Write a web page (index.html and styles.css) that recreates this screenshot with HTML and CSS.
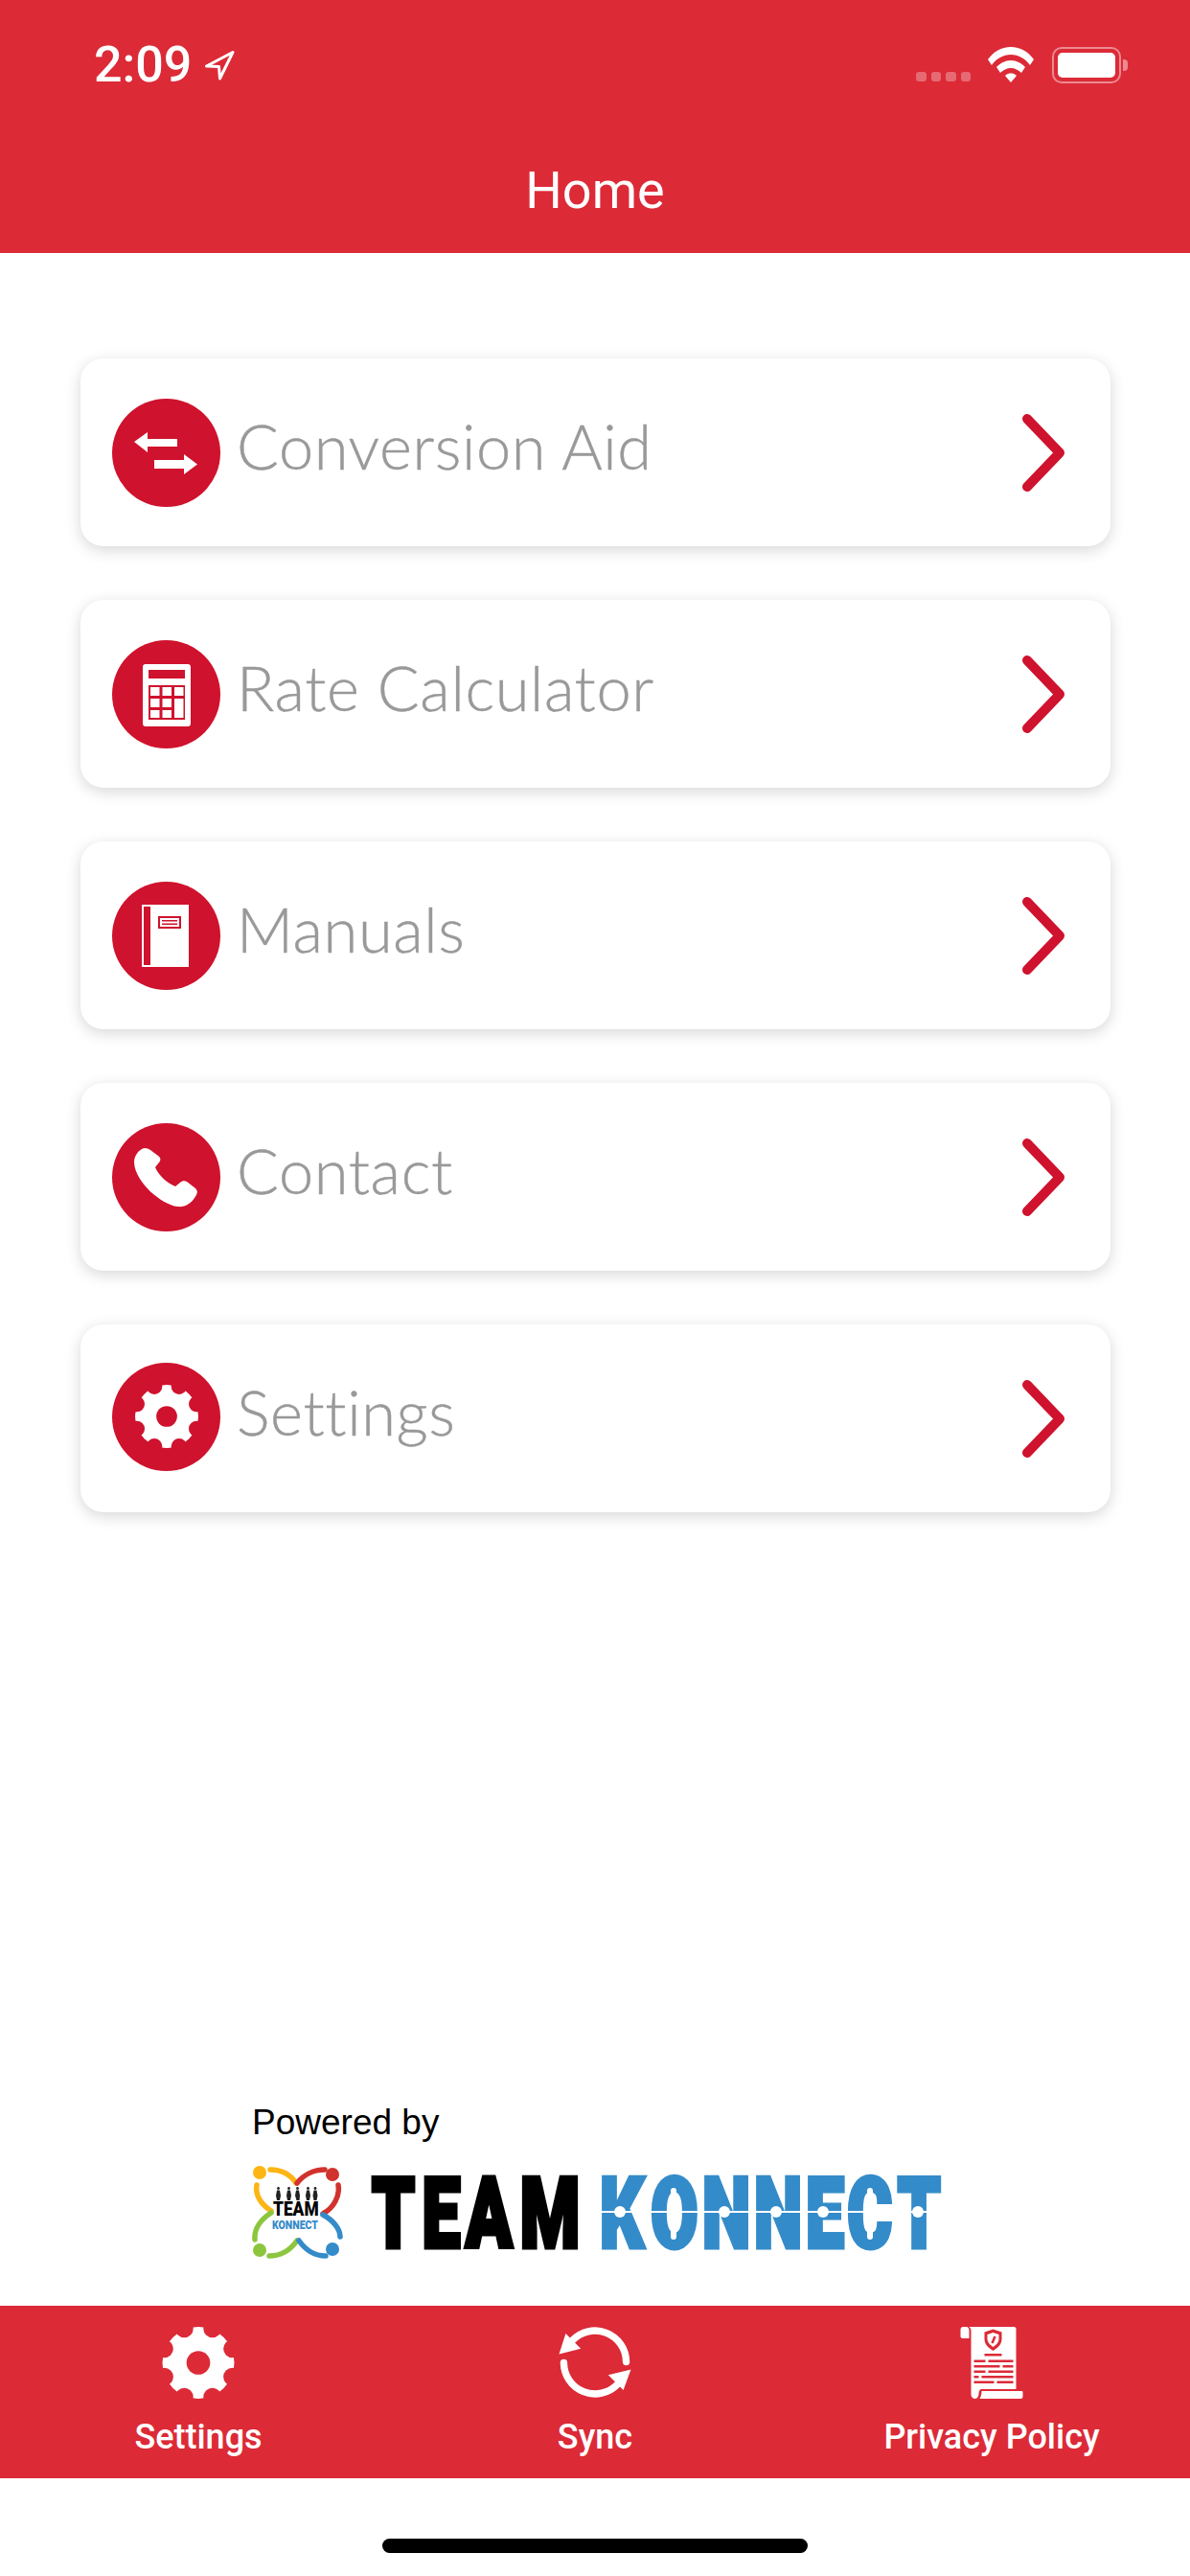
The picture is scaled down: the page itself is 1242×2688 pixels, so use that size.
FILE: index.html
```html
<!DOCTYPE html>
<html lang="en">
<head>
<meta charset="utf-8">
<title>Home</title>
<link rel="stylesheet" href="styles.css">
</head>
<body>
<svg class="defs" width="0" height="0" aria-hidden="true">
  <symbol id="gear" viewBox="0 0 76 76">
    <circle class="gear-body" cx="38" cy="38" r="38"/>
    <g class="gear-cut">
      <circle cx="38" cy="38" r="12.5"/>
      <circle cx="52.9" cy="2" r="9.5"/>
      <circle cx="74" cy="23.1" r="9.5"/>
      <circle cx="74" cy="52.9" r="9.5"/>
      <circle cx="52.9" cy="74" r="9.5"/>
      <circle cx="23.1" cy="74" r="9.5"/>
      <circle cx="2" cy="52.9" r="9.5"/>
      <circle cx="2" cy="23.1" r="9.5"/>
      <circle cx="23.1" cy="2" r="9.5"/>
    </g>
  </symbol>
</svg>

<div class="page">
  <header class="topbar">
    <div class="status">
      <div class="status-left">
        <span class="time">2:09</span>
        <svg class="loc" viewBox="0 0 32 32"><path d="M30 2.500 L2.500 17 L15.500 17.500 L16.500 30 Z" fill="none" stroke="#fff" stroke-width="3" stroke-linejoin="round"/></svg>
      </div>
      <div class="status-right">
        <div class="signal"><i></i><i></i><i></i><i></i></div>
        <svg class="wifi" viewBox="0 0 48 37">
          <path d="M0 13 C6 5 14 0 24 0 C34 0 42 5 48 13 L44 19 C39 12 32 8 24 8 C16 8 9 12 4 19 Z" fill="#fff"/>
          <path d="M9 21 C13 17 18 14 24 14 C30 14 35 17 39 21 L35 27 C32 24 28 22 24 22 C20 22 16 24 13 27 Z" fill="#fff"/>
          <path d="M18 30 C20 28 22 27.500 24 27.500 C26 27.500 28 28 30 30 L24 37 Z" fill="#fff"/>
        </svg>
        <div class="battery"><div class="battery-fill"></div></div>
        <div class="battery-nub"></div>
      </div>
    </div>
    <h1 class="title">Home</h1>
  </header>

  <main class="menu">
    <a class="card">
      <svg class="badge" viewBox="0 0 113 113">
        <circle cx="56.500" cy="56.500" r="56.500" fill="#cf122d"/>
        <path d="M23 45 L37 35 V42 H68 V50 H37 V56 Z M44 64 H75 V58 L89 68.500 L75 79 V73 H44 Z" fill="#fff"/>
      </svg>
      <span class="label">Conversion Aid</span>
      <svg class="chev" viewBox="0 0 44 81"><path d="M5 5 L39 40.500 L5 76" fill="none" stroke="#cf122d" stroke-width="10" stroke-linecap="round" stroke-linejoin="round"/></svg>
    </a>
    <a class="card">
      <svg class="badge" viewBox="0 0 113 113">
        <circle cx="56.500" cy="56.500" r="56.500" fill="#cf122d"/>
        <rect x="32" y="25" width="50" height="65" rx="3" fill="#fff"/>
        <g fill="#cf122d">
          <rect x="38" y="31" width="38" height="9"/>
          <rect x="38" y="47" width="38" height="36"/>
        </g>
        <g fill="#fff">
          <rect x="40" y="49" width="9.500" height="9"/><rect x="52.500" y="49" width="9.500" height="9"/><rect x="65" y="49" width="9.500" height="9"/>
          <rect x="40" y="61" width="9.500" height="9"/><rect x="52.500" y="61" width="9.500" height="9"/><rect x="65" y="61" width="9.500" height="20"/>
          <rect x="40" y="73" width="9.500" height="8"/><rect x="52.500" y="73" width="9.500" height="8"/>
        </g>
      </svg>
      <span class="label">Rate Calculator</span>
      <svg class="chev" viewBox="0 0 44 81"><path d="M5 5 L39 40.500 L5 76" fill="none" stroke="#cf122d" stroke-width="10" stroke-linecap="round" stroke-linejoin="round"/></svg>
    </a>
    <a class="card">
      <svg class="badge" viewBox="0 0 113 113">
        <circle cx="56.500" cy="56.500" r="56.500" fill="#cf122d"/>
        <rect x="31" y="24" width="49" height="65" fill="#fff"/>
        <rect x="33" y="26" width="7" height="61" fill="#cf122d"/>
        <rect x="48" y="36" width="24" height="13" fill="#cf122d"/>
        <rect x="50" y="38" width="20" height="9" fill="#fff"/>
        <rect x="52" y="40" width="16" height="1.500" fill="#cf122d"/>
        <rect x="52" y="43.500" width="16" height="1.500" fill="#cf122d"/>
      </svg>
      <span class="label">Manuals</span>
      <svg class="chev" viewBox="0 0 44 81"><path d="M5 5 L39 40.500 L5 76" fill="none" stroke="#cf122d" stroke-width="10" stroke-linecap="round" stroke-linejoin="round"/></svg>
    </a>
    <a class="card">
      <svg class="badge" viewBox="0 0 113 113">
        <circle cx="56.500" cy="56.500" r="56.500" fill="#cf122d"/>
        <path d="M31 27 C34 25 37 26 40 28 L48 34 C51 36 51 39 49 41 L45 46 C48 54 58 63 66 66 L71 62 C73 60 76 60 78 61 L87 68 C90 71 89 74 86 78 C82 84 76 88 68 87 C52 85 24 62 23 41 C23 35 26 30 31 27 Z" fill="#fff"/>
      </svg>
      <span class="label">Contact</span>
      <svg class="chev" viewBox="0 0 44 81"><path d="M5 5 L39 40.500 L5 76" fill="none" stroke="#cf122d" stroke-width="10" stroke-linecap="round" stroke-linejoin="round"/></svg>
    </a>
    <a class="card">
      <span class="badge badge-gear"><svg class="gear-main"><use href="#gear"/></svg></span>
      <span class="label">Settings</span>
      <svg class="chev" viewBox="0 0 44 81"><path d="M5 5 L39 40.500 L5 76" fill="none" stroke="#cf122d" stroke-width="10" stroke-linecap="round" stroke-linejoin="round"/></svg>
    </a>
  </main>

  <section class="powered">
    <p class="powered-text">Powered by</p>
    <svg class="logo" viewBox="0 -14 760 130">
      <g fill="none" stroke-width="5.500" stroke-linecap="round">
        <path d="M19 4 C30 4 40 9 46 18 M5 20 C3 30 9 40 20 47" stroke="#fdb515"/>
        <path d="M47 18 C54 9 65 4 76 4 M90 20 C92 32 85 44 74 50" stroke="#d2322d"/>
        <path d="M20 49 C9 56 2 66 3 77 M18 94 C30 94 40 88 47 78" stroke="#8cc63f"/>
        <path d="M74 51 C85 57 92 66 92 74 M49 78 C56 88 66 94 77 94" stroke="#348bc9"/>
      </g>
      <circle cx="8" cy="7" r="7" fill="#fdb515"/>
      <circle cx="84" cy="9" r="7" fill="#d2322d"/>
      <circle cx="8" cy="88" r="7" fill="#8cc63f"/>
      <circle cx="84" cy="87" r="7" fill="#348bc9"/>
      <g fill="#222">
        <circle cx="27.500" cy="23.500" r="1.400"/><circle cx="38.500" cy="23.500" r="1.400"/><circle cx="47.500" cy="23.500" r="1.400"/><circle cx="58.500" cy="23.500" r="1.400"/><circle cx="66" cy="23.500" r="1.400"/>
        <path d="M26 25.500 H29 L30 31 L29 36 H26 L25 31 Z"/>
        <path d="M37 25.500 H40 L41 31 L40 36 H37 L36 31 Z"/>
        <path d="M46 25.500 H49 L50 31 L49.500 36 H46.500 L45 31 Z"/>
        <path d="M57 25.500 H60 L61 31 L60 36 H57 L56 31 Z"/>
        <path d="M64.500 25.500 H67.500 L68.500 31 L67.500 36 H64.500 L63.500 31 Z"/>
      </g>
      <text class="mark-team" transform="matrix(.82 0 0 1 22 52)" textLength="58" lengthAdjust="spacingAndGlyphs">TEAM</text>
      <text class="mark-konnect" transform="matrix(.8 0 0 1 21 66)" textLength="60" lengthAdjust="spacingAndGlyphs">KONNECT</text>
      <text class="word word-team" transform="matrix(.7 0 0 1 125 84.500)" x="0 75 140 221">TEAM</text>
      <text class="word word-konnect" transform="matrix(.7 0 0 1 363 84.500)" x="0 76 153 230 307 369 444">KONNECT</text>
      <g fill="#fff">
        <rect x="365" y="47" width="352" height="2"/>
        <rect x="437" y="23" width="6" height="54" rx="3"/>
        <rect x="642" y="23" width="6" height="54" rx="3"/>
        <circle cx="384" cy="48" r="6"/><circle cx="440" cy="48" r="6"/><circle cx="493" cy="48" r="6"/><circle cx="547" cy="48" r="6"/><circle cx="596" cy="48" r="6"/><circle cx="645" cy="48" r="6"/><circle cx="695" cy="48" r="6"/>
      </g>
    </svg>
  </section>

  <nav class="tabs">
    <a class="tab">
      <svg class="tab-icon gear-tab"><use href="#gear"/></svg>
      <span class="tab-label">Settings</span>
    </a>
    <a class="tab">
      <svg class="tab-icon" viewBox="0 0 76 76">
        <g fill="none" stroke="#fff" stroke-width="7.500" stroke-linecap="round">
          <path d="M14 14.500 A33 33 0 0 1 71 37"/>
          <path d="M5 38 A33 33 0 0 0 62 60.500"/>
        </g>
        <path d="M0 29 L7 7 L23 23 Z M76 45 L68 67 L52 51 Z" fill="#fff"/>
      </svg>
      <span class="tab-label">Sync</span>
    </a>
    <a class="tab">
      <svg class="tab-icon" viewBox="0 0 65 75">
        <path d="M0 3 C0 1 1 0 3 0 H6 C8 0 9 2 9 4 V12 H2 C1 12 0 11 0 10 Z" fill="#fff"/>
        <path d="M9 0 H56 C57 0 58 1 58 2 V65 H22 C20 65 19 67 19 70 C19 73 17 75 15 75 C13 75 11 73 11 71 V4 C11 2 10 1 9 0 Z" fill="#fff"/>
        <path d="M22 67 H64 C65 67 65 68 65 69 V73 C65 74 64 75 63 75 H20 C21 73 22 71 22 67 Z" fill="#fff"/>
        <path d="M34 2.500 L43 5.500 V13 C43 18 39 22 34 25 C29 22 25 18 25 13 V5.500 Z" fill="#dc2a37"/>
        <path d="M34 6 L40 8 V13 C40 16 37 19 34 21 C31 19 28 16 28 13 V8 Z" fill="#fff"/>
        <path d="M36 10 L33 17" stroke="#dc2a37" stroke-width="2.500" fill="none"/>
        <g fill="#dc2a37">
          <rect x="25" y="28" width="18" height="2.500"/>
          <rect x="14" y="34.500" width="12" height="2.500"/><rect x="29" y="34.500" width="26" height="2.500"/>
          <rect x="14" y="40" width="27" height="2.500"/><rect x="44" y="40" width="11" height="2.500"/>
          <rect x="14" y="45.500" width="12" height="2.500"/><rect x="29" y="45.500" width="26" height="2.500"/>
          <rect x="14" y="51" width="5" height="2.500"/><rect x="22" y="51" width="33" height="2.500"/>
          <rect x="14" y="56.500" width="21" height="2.500"/><rect x="38" y="56.500" width="17" height="2.500"/>
        </g>
      </svg>
      <span class="tab-label">Privacy Policy</span>
    </a>
  </nav>

  <footer class="home-area"><div class="home-bar"></div></footer>
</div>
</body>
</html>
```

FILE: styles.css
```css
* { box-sizing: border-box; }
html, body { margin: 0; padding: 0; background: #fff; }
body { font-family: Roboto, "Liberation Sans", sans-serif; }
.defs { position: absolute; }

.page {
  width: 1242px;
  height: 2688px;
  display: flex;
  flex-direction: column;
  overflow: hidden;
}

.topbar {
  height: 264px;
  background: #dc2a37;
  color: #fff;
  display: flex;
  flex-direction: column;
}
.status {
  height: 168px;
  padding: 49px 65px 0 98px;
  display: flex;
  justify-content: space-between;
  align-items: flex-start;
}
.status-left { display: flex; align-items: center; height: 38px; gap: 13px; }
.time { font-size: 52px; font-weight: 500; line-height: 38px; }
.loc { width: 32px; height: 32px; }
.status-right { display: flex; align-items: flex-start; }
.signal { display: flex; gap: 5px; margin-top: 26px; margin-right: 18px; }
.signal i {
  display: block;
  width: 10.500px;
  height: 10px;
  border-radius: 3px;
  background: rgba(255, 255, 255, .3);
}
.wifi { width: 48px; height: 37px; margin-right: 19px; }
.battery {
  width: 72px;
  height: 38px;
  border: 2.500px solid rgba(255, 255, 255, .45);
  border-radius: 10px;
  padding: 4px;
}
.battery-fill { height: 100%; background: #fff; border-radius: 5px; }
.battery-nub {
  width: 5px;
  height: 12px;
  margin: 13px 0 0 2px;
  background: rgba(255, 255, 255, .45);
  border-radius: 0 4px 4px 0;
}
.title {
  margin: 1px 0 0;
  text-align: center;
  font-size: 54px;
  font-weight: 400;
  line-height: 60px;
}

.menu {
  flex: 1;
  padding: 110px 83px 0 84px;
  display: flex;
  flex-direction: column;
  gap: 56px;
}
.card {
  height: 196px;
  background: #fff;
  border-radius: 24px;
  box-shadow: 0 4px 16px rgba(0, 0, 0, .16);
  padding: 0 48px 0 33px;
  display: flex;
  align-items: center;
}
.badge { width: 113px; height: 113px; flex: none; }
.badge-gear {
  border-radius: 50%;
  background: #cf122d;
  color: #cf122d;
  display: flex;
  align-items: center;
  justify-content: center;
  margin-top: -4px;
}
.gear-main { width: 66px; height: 66px; }
.gear-body { fill: #fff; }
.gear-cut { fill: currentColor; }
.label {
  flex: 1;
  margin: -15px 0 0 17px;
  font-family: Lato, sans-serif;
  font-size: 65px;
  font-weight: 300;
  letter-spacing: .6px;
  color: #999;
  -webkit-text-stroke: .4px #999;
  line-height: 80px;
}
.chev { width: 44px; height: 81px; flex: none; }

.powered { padding-left: 263px; height: 215px; }
.powered-text {
  margin: 1px 0 8px;
  font-family: "Liberation Sans", sans-serif;
  font-size: 37px;
  line-height: 46px;
  color: #000;
}
.logo { display: block; width: 760px; height: 130px; }
.mark-team { font-family: Roboto, sans-serif; font-weight: 900; font-size: 21px; fill: #000; }
.mark-konnect { font-family: Roboto, sans-serif; font-weight: 900; font-size: 13px; fill: #348bc9; }
.word { font-family: Roboto, sans-serif; font-weight: 900; font-size: 102px; stroke-width: 5px; stroke-linejoin: miter; }
.word-team { fill: #000; stroke: #000; }
.word-konnect { fill: #348bc9; stroke: #348bc9; }

.tabs {
  height: 180px;
  background: #dc2a37;
  display: grid;
  grid-template-columns: repeat(3, 1fr);
}
.tab {
  display: flex;
  flex-direction: column;
  align-items: center;
  padding-top: 22px;
  color: #fff;
}
.tab-icon { width: 76px; height: 75px; display: block; }
.gear-tab { color: #dc2a37; }
.tab-label {
  margin-top: 18px;
  font-size: 36px;
  font-weight: 500;
  line-height: 44px;
}

.home-area {
  height: 102px;
  display: flex;
  justify-content: center;
  padding-top: 63px;
}
.home-bar { width: 444px; height: 15px; border-radius: 8px; background: #000; }
```
